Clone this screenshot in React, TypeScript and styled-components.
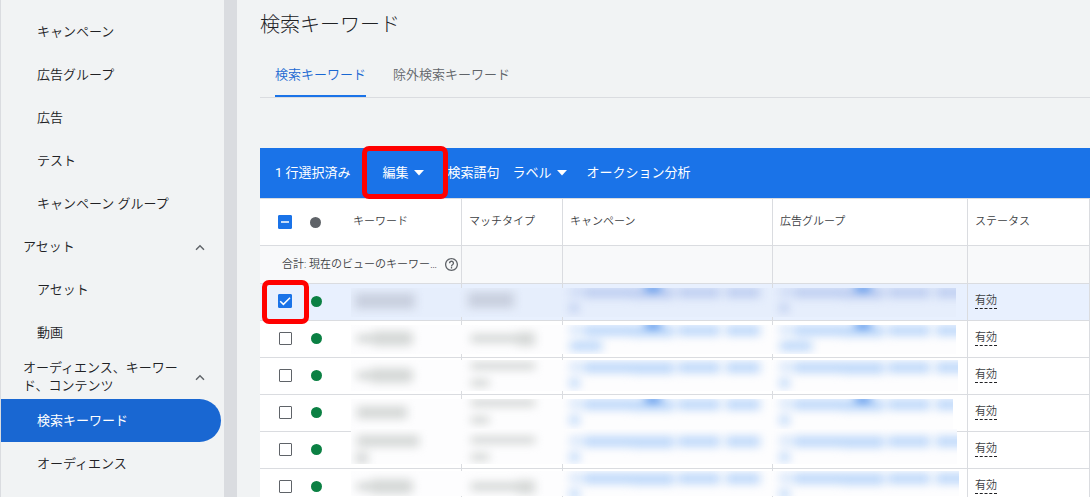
import React from "react";
import styled, { createGlobalStyle, css } from "styled-components";

const color = {
  surface: "#f1f3f4",
  line: "#dadce0",
  text: "#202124",
  subtle: "#3c4043",
  muted: "#5f6368",
  primary: "#1a73e8",
  primaryDark: "#1967d2",
  selected: "#e8f0fe",
  green: "#0b8043",
  mark: "#ff0000",
};

const GlobalStyle = createGlobalStyle`
  *, *::before, *::after { box-sizing: border-box; }
  body {
    margin: 0;
    background: ${color.surface};
    color: ${color.text};
    font-family: Roboto, "Noto Sans CJK JP", sans-serif;
    font-size: 13px;
    font-weight: 350;
    line-height: 18px;
  }
  button { font: inherit; }
`;

const Shell = styled.div`
  display: flex;
  height: 100vh;
  overflow: hidden;
  border-left: 1px solid ${color.line};
`;

const Sidebar = styled.nav`
  flex: 0 0 236px;
  padding-top: 10px;
  border-right: 13px solid ${color.line};
`;

const NavItem = styled.a<{ $active?: boolean }>`
  display: flex;
  align-items: center;
  height: 43px;
  margin-right: 3px;
  padding-left: 36px;
  color: ${color.text};
  text-decoration: none;
  ${(p) =>
    p.$active &&
    css`
      border-radius: 0 22px 22px 0;
      background: ${color.primaryDark};
      color: #fff;
      font-weight: 400;
    `}
`;

const NavGroup = styled.button<{ $tall?: boolean }>`
  display: flex;
  align-items: center;
  justify-content: space-between;
  width: 100%;
  height: ${(p) => (p.$tall ? 45 : 43)}px;
  padding: 0 15px 0 22px;
  border: 0;
  background: none;
  color: ${color.text};
  text-align: left;

  svg {
    flex: none;
  }
`;

const Main = styled.main`
  flex: 1;
  min-width: 0;
  padding-left: 23px;
`;

const Title = styled.h1`
  margin: 0;
  padding-top: 11px;
  font-size: 20px;
  font-weight: 300;
  line-height: 28px;
`;

const Tabs = styled.div`
  display: flex;
  gap: 27px;
  height: 46px;
  margin-top: 13px;
  padding-left: 15px;
  border-bottom: 1px solid ${color.line};
`;

const Tab = styled.button<{ $active?: boolean }>`
  padding: 2px 0 0;
  border: 0;
  border-bottom: 2px solid ${(p) => (p.$active ? color.primary : "transparent")};
  background: none;
  color: ${(p) => (p.$active ? color.primaryDark : color.muted)};
`;

const Toolbar = styled.div`
  display: flex;
  align-items: center;
  height: 50px;
  margin-top: 50px;
  padding-left: 15px;
  background: ${color.primary};
  color: #fff;
  font-weight: 400;
  white-space: nowrap;
`;

const Count = styled.span`
  margin-right: 16px;
`;

const ToolButton = styled.button<{ $pad?: string }>`
  position: relative;
  display: flex;
  align-items: center;
  gap: 5px;
  height: 100%;
  padding: ${(p) => p.$pad ?? "0 8px"};
  border: 0;
  background: none;
  color: inherit;
`;

const Highlight = styled.span<{ $inset: string }>`
  position: absolute;
  z-index: 3;
  inset: ${(p) => p.$inset};
  border: 5px solid ${color.mark};
  border-radius: 7px;
  pointer-events: none;
`;

const Table = styled.table`
  width: 100%;
  table-layout: fixed;
  border-collapse: separate;
  border-spacing: 0;
  border-top: 1px solid ${color.line};
  border-right: 1px solid ${color.line};
  background: #fff;
  color: ${color.subtle};
  font-size: 11px;
`;

const Col = styled.col<{ $w?: number }>`
  width: ${(p) => (p.$w ? `${p.$w}px` : "auto")};
`;

const cell = css<{ $divider?: boolean; $start?: number }>`
  padding: 0 0 0 ${(p) => p.$start ?? 7}px;
  border-bottom: 1px solid ${color.line};
  border-right: ${(p) => (p.$divider ? `1px solid ${color.line}` : "0")};
  text-align: left;
  white-space: nowrap;
`;

const HeadCell = styled.th<{ $divider?: boolean; $start?: number }>`
  ${cell}
  height: 47px;
  font-weight: 350;
`;

const SumCell = styled.td<{ $divider?: boolean; $start?: number }>`
  ${cell}
  height: 38px;
  background: #f8f9fa;
`;

const SumLabel = styled.div`
  display: flex;
  align-items: center;
  justify-content: space-between;
  padding-right: 3px;
`;

const Row = styled.tr<{ $selected?: boolean }>`
  background: ${(p) => (p.$selected ? color.selected : "#fff")};
`;

const Cell = styled.td<{ $divider?: boolean; $start?: number }>`
  ${cell}
  position: relative;
  height: 37px;
  padding-bottom: 2px;
`;

const CheckLabel = styled.label`
  position: relative;
  display: block;
  width: 14px;
  height: 14px;

  svg {
    position: absolute;
    inset: 0;
    pointer-events: none;
  }
`;

const CheckInput = styled.input<{ $filled: boolean }>`
  appearance: none;
  display: block;
  width: ${(p) => (p.$filled ? 14 : 13)}px;
  height: ${(p) => (p.$filled ? 14 : 13)}px;
  margin: 0;
  border: 1px solid ${(p) => (p.$filled ? color.primary : color.muted)};
  border-radius: 1px;
  background: ${(p) => (p.$filled ? color.primary : "#fff")};
  ${(p) => !p.$filled && "transform: translate(1px, 1px);"}
`;

const Dot = styled.span<{ $color: string }>`
  display: block;
  width: 11px;
  height: 11px;
  border-radius: 50%;
  background: ${(p) => p.$color};
`;

const Status = styled.span`
  display: inline-block;
  margin-bottom: 2px;
  border-bottom: 1px dashed ${color.text};
  line-height: 14px;
`;

const Veil = styled.svg`
  position: absolute;
  z-index: 1;
  left: 5px;
  display: block;
`;

function Check({ state, label }: { state: "on" | "off" | "mixed"; label: string }) {
  return (
    <CheckLabel>
      <CheckInput type="checkbox" aria-label={label} defaultChecked={state === "on"} $filled={state !== "off"} />
      {state !== "off" && (
        <svg width="14" height="14" viewBox="0 0 14 14" fill="none" stroke="#fff" strokeWidth="1.5">
          <path d={state === "on" ? "M2.2 7.2 5.4 10.4 12 3.8" : "M3 7h8"} />
        </svg>
      )}
    </CheckLabel>
  );
}

const Chevron = () => (
  <svg width="18" height="18" viewBox="0 0 24 24" fill={color.muted}>
    <path d="M12 9l-6 6 1.41 1.41L12 11.83l4.59 4.58L18 15z" />
  </svg>
);

const Caret = () => (
  <svg width="10" height="7" viewBox="0 0 10 7" fill="#fff">
    <path d="M0 0h10L5 5.5z" />
  </svg>
);

const Help = () => (
  <svg width="13" height="13" viewBox="2 2 20 20" fill={color.muted}>
    <path d="M11 18h2v-2h-2v2zm1-16C6.48 2 2 6.48 2 12s4.48 10 10 10 10-4.48 10-10S17.52 2 12 2zm0 18c-4.41 0-8-3.59-8-8s3.59-8 8-8 8 3.59 8 8-3.59 8-8 8zm0-14c-2.21 0-4 1.79-4 4h2c0-1.1.9-2 2-2s2 .9 2 2c0 2-3 1.75-3 5h2c0-2.25 3-2.5 3-5 0-2.21-1.79-4-4-4z" />
  </svg>
);

type RowData = {
  selected?: boolean;
  top: number;
  height: number;
  width: number;
  keyword: number[][];
  match: number[][];
  lineY: number;
  tail: number;
  spot?: boolean;
};

// Each smudge is [x, y, width, height] measured from the row's top and the veil's left edge.
const twoLineMatch = [
  [120, 4, 64, 8],
  [120, 21, 18, 8],
];
const rows: RowData[] = [
  { selected: true, top: 4, height: 29, width: 605, keyword: [[4, 9, 60, 16]], match: [[117, 8, 46, 16]], lineY: 3, tail: 8, spot: true },
  { top: 4, height: 29, width: 605, keyword: [[6, 13, 56, 9], [22, 10, 38, 15]], match: [[120, 13, 46, 9], [166, 11, 18, 14]], lineY: 4, tail: 32, spot: true },
  { top: 2, height: 31, width: 607, keyword: [[6, 13, 56, 9], [20, 10, 40, 15]], match: twoLineMatch, lineY: 4, tail: 9 },
  { top: 4, height: 30, width: 602, keyword: [[6, 11, 50, 13]], match: twoLineMatch, lineY: 4, tail: 9, spot: true },
  { top: -3, height: 35, width: 606, keyword: [[6, 3, 62, 12], [5, 20, 12, 12]], match: twoLineMatch, lineY: 4, tail: 9 },
  { top: 2, height: 25, width: 608, keyword: [[6, 13, 56, 9], [20, 10, 40, 15]], match: [[120, 13, 46, 9], [166, 11, 18, 14]], lineY: 4, tail: 9 },
];

function Redaction({ row, index }: { row: RowData; index: number }) {
  const gray = row.selected ? "#c9d0df" : "#d6d9d8";
  const blue = row.selected ? "#bfcff1" : "#bfd9fa";
  const id = `soft-${index}`;
  return (
    <Veil
      style={{ top: row.top }}
      width={row.width}
      height={row.height}
      viewBox={`0 ${row.top} ${row.width} ${row.height}`}
      aria-hidden="true"
    >
      <filter
        id={id}
        x="-50"
        y="-50"
        width="720"
        height="140"
        filterUnits="userSpaceOnUse"
        colorInterpolationFilters="sRGB"
      >
        <feGaussianBlur stdDeviation="5 4" />
      </filter>
      <rect y={row.top} width={row.width} height={row.height} fill={row.selected ? "#e6eefc" : "#fdfdfe"} />
      <g filter={`url(#${id})`}>
        {[...row.keyword, ...row.match].map(([x, y, w, h]) => (
          <rect key={`${x}-${y}`} x={x} y={y} width={w} height={h} fill={gray} />
        ))}
        {[219, 429].map((x) => (
          <g key={x} fill={blue}>
            <rect x={x} y={row.lineY} width="12" height="10" opacity="0.6" />
            <rect x={x + 14} y={row.lineY} width="48" height="11" />
            <rect x={x + 62} y={row.lineY} width="42" height="12" />
            <rect x={x + 108} y={row.lineY} width="42" height="11" />
            <rect x={x + 156} y={row.lineY} width="34" height="11" />
            <rect x={x} y={row.lineY + 16} width={row.tail} height="10" />
            {row.spot && <rect x={x + 75} y="0" width="16" height="8" fill="#5d98ec" />}
          </g>
        ))}
      </g>
    </Veil>
  );
}

export default function App() {
  return (
    <>
      <GlobalStyle />
      <Shell>
        <Sidebar>
          <NavItem href="#campaigns">キャンペーン</NavItem>
          <NavItem href="#adgroups">広告グループ</NavItem>
          <NavItem href="#ads">広告</NavItem>
          <NavItem href="#tests">テスト</NavItem>
          <NavItem href="#campaign-groups">キャンペーン グループ</NavItem>
          <NavGroup>
            アセット
            <Chevron />
          </NavGroup>
          <NavItem href="#assets">アセット</NavItem>
          <NavItem href="#videos">動画</NavItem>
          <NavGroup $tall>
            <span>
              オーディエンス、キーワー
              <br />
              ド、コンテンツ
            </span>
            <Chevron />
          </NavGroup>
          <NavItem href="#keywords" $active>
            検索キーワード
          </NavItem>
          <NavItem href="#audiences">オーディエンス</NavItem>
        </Sidebar>
        <Main>
          <Title>検索キーワード</Title>
          <Tabs>
            <Tab $active>検索キーワード</Tab>
            <Tab>除外検索キーワード</Tab>
          </Tabs>
          <Toolbar>
            <Count>1 行選択済み</Count>
            <ToolButton $pad="0 16px">
              編集
              <Caret />
              <Highlight $inset="-2px -8px -1px -5px" />
            </ToolButton>
            <ToolButton>検索語句</ToolButton>
            <ToolButton $pad="0 12px 0 5px">
              ラベル
              <Caret />
            </ToolButton>
            <ToolButton>オークション分析</ToolButton>
          </Toolbar>
          <Table>
            <colgroup>
              <Col $w={50} />
              <Col $w={36} />
              <Col $w={116} />
              <Col $w={101} />
              <Col $w={210} />
              <Col $w={195} />
              <Col />
            </colgroup>
            <thead>
              <tr>
                <HeadCell $start={18}>
                  <Check state="mixed" label="すべて選択" />
                </HeadCell>
                <HeadCell $start={0}>
                  <Dot $color={color.muted} />
                </HeadCell>
                <HeadCell $divider>キーワード</HeadCell>
                <HeadCell $divider>マッチタイプ</HeadCell>
                <HeadCell $divider>キャンペーン</HeadCell>
                <HeadCell $divider>広告グループ</HeadCell>
                <HeadCell>ステータス</HeadCell>
              </tr>
            </thead>
            <tbody>
              <tr>
                <SumCell colSpan={3} $divider $start={22}>
                  <SumLabel>
                    合計: 現在のビューのキーワー…
                    <Help />
                  </SumLabel>
                </SumCell>
                <SumCell $divider />
                <SumCell $divider />
                <SumCell $divider />
                <SumCell />
              </tr>
              {rows.map((row, i) => (
                <Row key={i} $selected={row.selected}>
                  <Cell $start={18}>
                    <Check state={row.selected ? "on" : "off"} label={`行 ${i + 1} を選択`} />
                    {row.selected && <Highlight $inset="-4px 1px -4px 2px" />}
                  </Cell>
                  <Cell $start={1}>
                    <Dot $color={color.green} />
                  </Cell>
                  <Cell $divider>
                    <Redaction row={row} index={i} />
                  </Cell>
                  <Cell $divider />
                  <Cell $divider />
                  <Cell $divider />
                  <Cell>
                    <Status>有効</Status>
                  </Cell>
                </Row>
              ))}
            </tbody>
          </Table>
        </Main>
      </Shell>
    </>
  );
}
